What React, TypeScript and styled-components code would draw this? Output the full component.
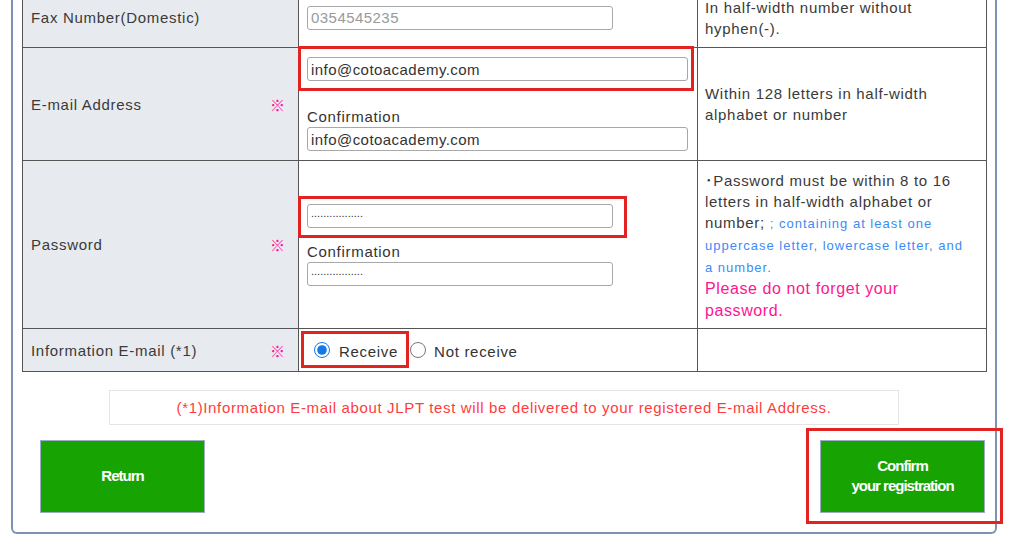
import styled, { createGlobalStyle } from 'styled-components'

const GlobalStyle = createGlobalStyle`
  body {
    margin: 0;
    background: #fff;
    color: #333;
    font-family: 'Liberation Sans', 'Noto Sans CJK JP', Arial, sans-serif;
  }
`

const Frame = styled.div`
  margin-left: 11px;
  width: 986px;
  box-sizing: border-box;
  border: 2px solid #8191b5;
  border-top: none;
  border-radius: 0 0 6px 6px;
  padding: 0 9px 19px;
`

const FormTable = styled.table`
  width: 964px;
  margin-top: -13px;
  border-collapse: collapse;
  table-layout: fixed;
  font-size: 15px;
  letter-spacing: 0.7px;
`

const Col = styled.col<{ $w: number }>`
  width: ${(p) => p.$w}px;
`

const Row = styled.tr<{ $h: number }>`
  height: ${(p) => p.$h}px;
`

const LabelCell = styled.td`
  border: 1px solid #555;
  background: #e7ebef;
  padding: 0 13px 0 8px;
  vertical-align: middle;
  color: #3a3a3a;
`

const LabelInner = styled.div`
  display: flex;
  justify-content: space-between;
  align-items: center;
`

const Required = styled.span`
  color: #ff1493;
  font-family: 'Noto Sans CJK JP', sans-serif;
  font-size: 15px;
  letter-spacing: 0;
`

const InputCell = styled.td`
  border: 1px solid #555;
  padding: 0 8px;
  vertical-align: middle;
`

const NoteCell = styled.td<{ $pt?: number }>`
  border: 1px solid #555;
  padding: ${(p) => p.$pt ?? 0}px 16px 0 7px;
  vertical-align: middle;
  line-height: 21px;
  color: #3a3a3a;
`

const Marked = styled.div`
  position: relative;
  display: inline-block;
`

const Mark = styled.span<{ $t: number; $r: number; $b: number; $l: number }>`
  position: absolute;
  top: ${(p) => p.$t}px;
  right: ${(p) => p.$r}px;
  bottom: ${(p) => p.$b}px;
  left: ${(p) => p.$l}px;
  border: 3px solid #e32222;
  pointer-events: none;
`

const TextInput = styled.input<{ $w: number; $dots?: boolean }>`
  display: block;
  box-sizing: border-box;
  width: ${(p) => p.$w}px;
  height: 24px;
  border: 1px solid #a8a8a8;
  border-radius: 3px;
  padding: ${(p) => (p.$dots ? '0 3px 5px' : '0 3px')};
  font-family: inherit;
  font-size: ${(p) => (p.$dots ? '11px' : '15px')};
  letter-spacing: ${(p) => (p.$dots ? '0' : '0.45px')};
  color: #333;
  background: #fff;
  &::placeholder {
    color: #9a9a9a;
  }
`

const SubLabel = styled.div<{ $gap: number }>`
  margin-top: ${(p) => p.$gap}px;
  line-height: 20px;
`

const RadioGroup = styled.div`
  display: flex;
  align-items: center;
  gap: 12px;
  padding-left: 7px;
`

const RadioLabel = styled.label<{ $gap: number }>`
  display: flex;
  align-items: center;
  gap: ${(p) => p.$gap}px;
  line-height: 20px;
  padding-top: 3px;
`

const Radio = styled.input`
  width: 16px;
  height: 16px;
  margin: -3px 0 0;
  accent-color: #1677e6;
`

const Blue = styled.span`
  color: #3d8af7;
  font-size: 13px;
  letter-spacing: 1px;
`

const Warn = styled.div`
  color: #ff1493;
  font-size: 16px;
  line-height: 22px;
  letter-spacing: 0.6px;
`

const Notice = styled.div`
  width: 790px;
  height: 35px;
  box-sizing: border-box;
  margin: 18px auto 0;
  border: 1px solid #e4e4e4;
  color: #ff3c3c;
  font-size: 15px;
  letter-spacing: 0.65px;
  line-height: 33px;
  text-align: center;
`

const ButtonRow = styled.div`
  display: flex;
  justify-content: space-between;
  align-items: flex-start;
  margin-top: 15px;
  padding: 0 1px 0 18px;
`

const GreenButton = styled.button`
  display: block;
  width: 165px;
  height: 73px;
  background: #17a302;
  border: 1px solid #9eacc4;
  color: #fff;
  font-family: 'Liberation Sans', Arial, sans-serif;
  font-size: 15px;
  font-weight: bold;
  letter-spacing: -1px;
  line-height: 20px;
  padding-bottom: 3px;
  cursor: pointer;
`

export default function App() {
  return (
    <>
      <GlobalStyle />
      <Frame>
        <FormTable>
          <colgroup>
            <Col $w={276} />
            <Col $w={399} />
            <Col $w={289} />
          </colgroup>
          <tbody>
            <Row $h={60}>
              <LabelCell>
                <LabelInner>
                  <span>Fax Number(Domestic)</span>
                </LabelInner>
              </LabelCell>
              <InputCell>
                <TextInput $w={306} placeholder="0354545235" />
              </InputCell>
              <NoteCell>In half-width number without hyphen(-).</NoteCell>
            </Row>
            <Row $h={113}>
              <LabelCell>
                <LabelInner>
                  <span>E-mail Address</span>
                  <Required>※</Required>
                </LabelInner>
              </LabelCell>
              <InputCell>
                <Marked>
                  <TextInput $w={381} defaultValue="info@cotoacademy.com" />
                  <Mark $t={-11} $r={-6} $b={-10} $l={-9} />
                </Marked>
                <SubLabel $gap={26}>Confirmation</SubLabel>
                <TextInput $w={381} defaultValue="info@cotoacademy.com" />
              </InputCell>
              <NoteCell>Within 128 letters in half-width alphabet or number</NoteCell>
            </Row>
            <Row $h={168}>
              <LabelCell>
                <LabelInner>
                  <span>Password</span>
                  <Required>※</Required>
                </LabelInner>
              </LabelCell>
              <InputCell>
                <Marked>
                  <TextInput $w={306} $dots defaultValue="................." />
                  <Mark $t={-8} $r={-14} $b={-10} $l={-9} />
                </Marked>
                <SubLabel $gap={14}>Confirmation</SubLabel>
                <TextInput $w={306} $dots defaultValue="................." />
              </InputCell>
              <NoteCell $pt={3}>
                ･Password must be within 8 to 16 letters in half-width alphabet or number;{' '}
                <Blue>; containing at least one uppercase letter, lowercase letter, and a number.</Blue>
                <Warn>Please do not forget your password.</Warn>
              </NoteCell>
            </Row>
            <Row $h={43}>
              <LabelCell>
                <LabelInner>
                  <span>Information E-mail (*1)</span>
                  <Required>※</Required>
                </LabelInner>
              </LabelCell>
              <InputCell>
                <RadioGroup>
                  <Marked>
                    <RadioLabel $gap={9}>
                      <Radio type="radio" name="info" defaultChecked />
                      Receive
                    </RadioLabel>
                    <Mark $t={-8} $r={-11} $b={-6} $l={-13} />
                  </Marked>
                  <RadioLabel $gap={8}>
                    <Radio type="radio" name="info" />
                    Not receive
                  </RadioLabel>
                </RadioGroup>
              </InputCell>
              <NoteCell />
            </Row>
          </tbody>
        </FormTable>
        <Notice>
          (*1)Information E-mail about JLPT test will be delivered to your registered E-mail Address.
        </Notice>
        <ButtonRow>
          <GreenButton>Return</GreenButton>
          <Marked>
            <GreenButton>
              Confirm
              <br />
              your registration
            </GreenButton>
            <Mark $t={-12} $r={-18} $b={-11} $l={-14} />
          </Marked>
        </ButtonRow>
      </Frame>
    </>
  )
}
